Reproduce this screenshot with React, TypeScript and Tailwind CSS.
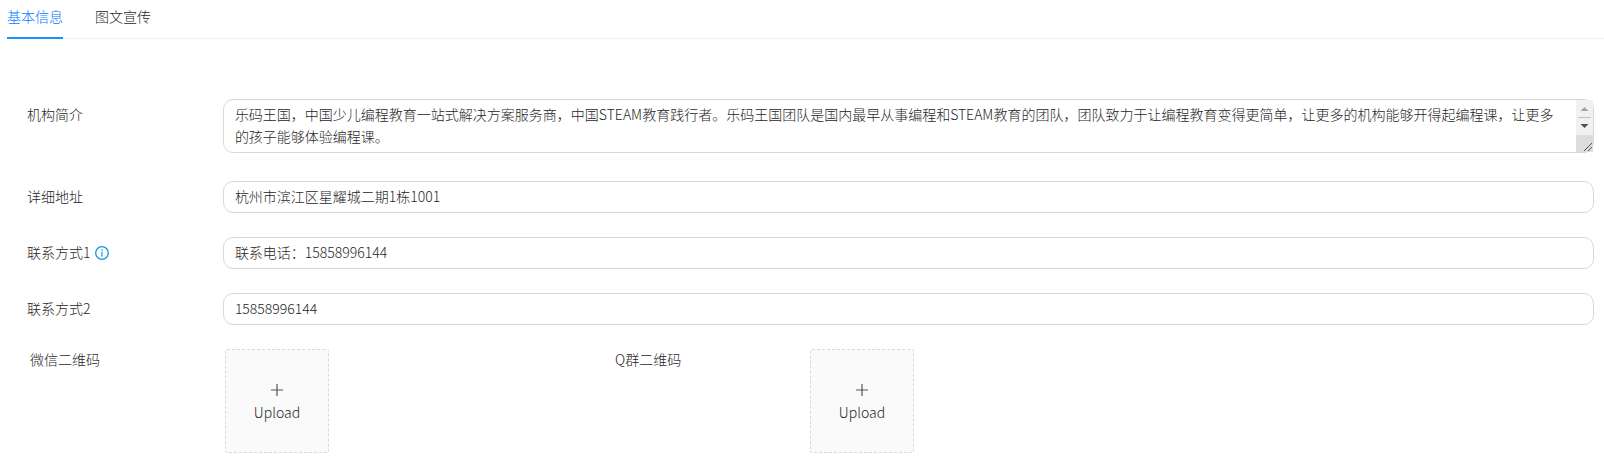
import React, { useState } from 'react';

const TABS = ['基本信息', '图文宣传'];

const INTRO =
  '乐码王国，中国少儿编程教育一站式解决方案服务商，中国STEAM教育践行者。乐码王国团队是国内最早从事编程和STEAM教育的团队，团队致力于让编程教育变得更简单，让更多的机构能够开得起编程课，让更多的孩子能够体验编程课。';

interface FieldRowProps {
  id: string;
  label: string;
  icon?: React.ReactNode;
  children: React.ReactNode;
}

function FieldRow({ id, label, icon, children }: FieldRowProps) {
  return (
    <div className="grid grid-cols-[1fr_7fr] items-start">
      <div className="flex h-8 items-center gap-1">
        <label htmlFor={id} className="pb-0.5">{label}</label>
        {icon}
      </div>
      {children}
    </div>
  );
}

function TextField({ id, value, onChange }: { id: string; value: string; onChange: (v: string) => void }) {
  return (
    <input
      id={id}
      type="text"
      value={value}
      onChange={(e) => onChange(e.target.value)}
      className="h-8 w-full rounded-[10px] border border-[#d9d9d9] bg-white px-[11px] pb-0.5 font-light outline-none focus:border-[#1890ff]"
    />
  );
}

function InfoIcon() {
  return (
    <svg viewBox="0 0 14 14" className="h-3.5 w-3.5" fill="none" aria-hidden="true">
      <circle cx="7" cy="7" r="6.3" stroke="#1296db" strokeWidth="1.3" />
      <path d="M7 5.800v4.700" stroke="#1296db" strokeWidth="1.2" />
      <circle cx="7" cy="4" r="0.8" fill="#1296db" />
    </svg>
  );
}

function UploadBox({ label }: { label: string }) {
  return (
    <button
      type="button"
      aria-label={label}
      className="flex h-[104px] w-[104px] cursor-pointer flex-col items-center justify-center rounded-xs border border-dashed border-[#d9d9d9] bg-[#fafafa] pt-1 hover:border-[#1890ff]"
    >
      <svg viewBox="0 0 14 14" className="h-3.5 w-3.5" fill="none" stroke="#555" strokeWidth="1.2" aria-hidden="true">
        <path d="M7 1v12M1 7h12" />
      </svg>
      <span className="mt-1 leading-[22px]">Upload</span>
    </button>
  );
}

export default function App() {
  const [activeTab, setActiveTab] = useState(0);
  const [intro, setIntro] = useState(INTRO);
  const [address, setAddress] = useState('杭州市滨江区星耀城二期1栋1001');
  const [contact1, setContact1] = useState('联系电话：15858996144');
  const [contact2, setContact2] = useState('15858996144');

  return (
    <div className="bg-white pl-[7px] font-['Noto_Sans_CJK_SC',sans-serif] text-sm font-light text-[#262626]">
      {/* Tabs */}
      <div role="tablist" className="flex gap-8 border-b border-[#f0f0f0]">
        {TABS.map((tab, i) => (
          <button
            key={tab}
            type="button"
            role="tab"
            aria-selected={activeTab === i}
            onClick={() => setActiveTab(i)}
            className={`-mb-px h-[39px] cursor-pointer border-b-2 pb-1.5 ${
              activeTab === i ? 'border-[#1890ff] text-[#007bff]' : 'border-transparent'
            }`}
          >
            {tab}
          </button>
        ))}
      </div>

      <form className="flex flex-col gap-6 pt-[60px] pr-[10px] pl-5" onSubmit={(e) => e.preventDefault()}>
        <FieldRow id="intro" label="机构简介">
          <div className="mb-1 flex h-[54px] rounded-[10px] border border-[#d9d9d9]">
            <textarea
              id="intro"
              value={intro}
              onChange={(e) => setIntro(e.target.value)}
              className="h-full min-w-0 flex-1 resize-none overflow-hidden px-[11px] py-[3px] leading-[22px] outline-none"
            />
            {/* Scroll buttons and resize grip */}
            <svg viewBox="0 0 17 52" className="h-[52px] w-[17px] shrink-0" aria-hidden="true">
              <rect width="17" height="35" fill="#f1f1f1" />
              <rect y="35" width="17" height="17" fill="#dcdcdc" />
              <path d="M4.500 11h8l-4-4z" fill="#a3a3a3" />
              <path d="M2 17.500h13" stroke="#c1c1c1" />
              <path d="M4.500 24h8l-4 4z" fill="#505050" />
              <path d="M8 51l8-8M12 51l4-4" stroke="#505050" />
            </svg>
          </div>
        </FieldRow>

        <FieldRow id="address" label="详细地址">
          <TextField id="address" value={address} onChange={setAddress} />
        </FieldRow>

        <FieldRow id="contact1" label="联系方式1" icon={<InfoIcon />}>
          <TextField id="contact1" value={contact1} onChange={setContact1} />
        </FieldRow>

        <FieldRow id="contact2" label="联系方式2">
          <TextField id="contact2" value={contact2} onChange={setContact2} />
        </FieldRow>

        {/* QR codes */}
        <div className="grid grid-cols-[1fr_2fr_1fr_4fr] pr-1 pl-[3px]">
          <span className="leading-5">微信二维码</span>
          <UploadBox label="Upload 微信二维码" />
          <span className="leading-5">Q群二维码</span>
          <UploadBox label="Upload Q群二维码" />
        </div>
      </form>
    </div>
  );
}
